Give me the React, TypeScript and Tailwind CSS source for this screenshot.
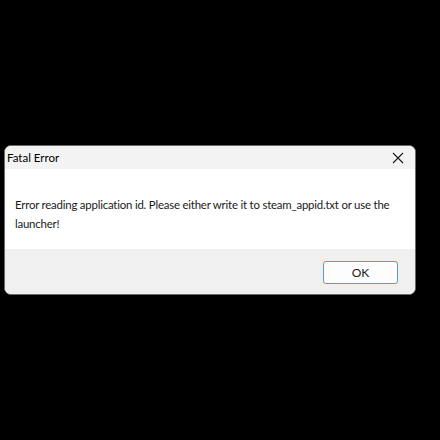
export default function App() {
    return (
        <div className="w-[440px] h-[440px] bg-black pt-[145px] pl-[4px]">
            <div
                className="w-[412px] h-[150px] rounded-[7px] overflow-hidden border border-[#6b6b6b] bg-white flex flex-col"
                style={{ fontFamily: 'Lato, "Noto Sans", sans-serif' }}
            >
                {/* title bar */}
                <div className="h-[23px] bg-[#f3f3f3] flex items-center justify-between pl-[2px] pr-[10px]">
                    <span className="text-[11.5px] text-black leading-none">Fatal Error</span>
                    <svg width="12" height="12" viewBox="0 0 12 12" className="mr-[1px]">
                        <path d="M1 1 L11 11 M11 1 L1 11" stroke="#1a1a1a" strokeWidth="1.1" fill="none" />
                    </svg>
                </div>
                {/* message */}
                <div className="h-[80px] bg-white pl-[10px] pr-[8px] pt-[26px]">
                    <p className="text-[11.4px] tracking-[-0.2px] leading-[19px] text-[#1a1a1a]">
                        Error reading application id. Please either write it to steam_appid.txt or use the launcher!
                    </p>
                </div>
                {/* footer */}
                <div className="flex-1 bg-[#f0f0f0] flex justify-end items-start pt-[12px] pr-[17px]">
                    <button className="w-[75px] h-[23px] bg-[#fdfdfd] border border-[#5b9bd5] rounded-[3px] text-[12px] text-[#1a1a1a] leading-none">
                        OK
                    </button>
                </div>
            </div>
        </div>
    )
}
